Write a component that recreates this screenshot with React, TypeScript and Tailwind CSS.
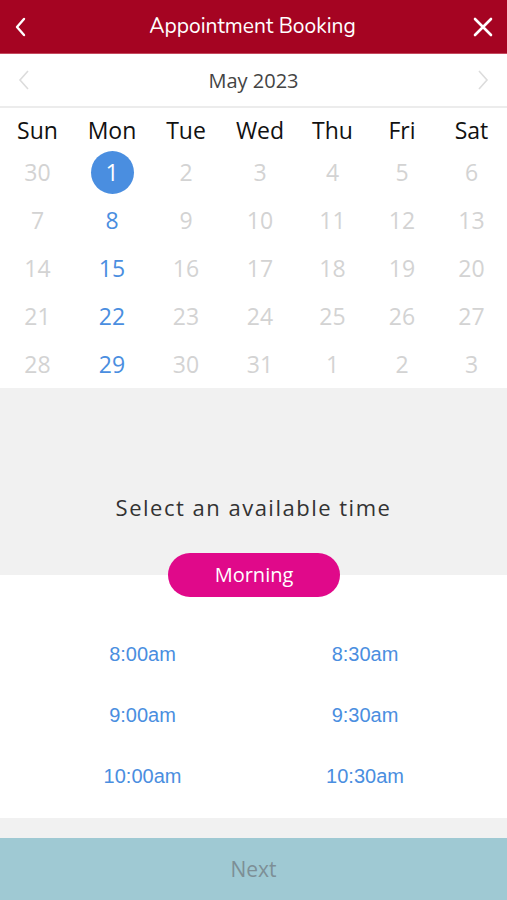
import React from "react";

const days = ["Sun", "Mon", "Tue", "Wed", "Thu", "Fri", "Sat"];
const weeks = [
  [30, 1, 2, 3, 4, 5, 6],
  [7, 8, 9, 10, 11, 12, 13],
  [14, 15, 16, 17, 18, 19, 20],
  [21, 22, 23, 24, 25, 26, 27],
  [28, 29, 30, 31, 1, 2, 3],
];
const times = [
  ["8:00am", "8:30am"],
  ["9:00am", "9:30am"],
  ["10:00am", "10:30am"],
];

export default function App() {
  return (
    <div className="w-[507px] h-[900px] flex flex-col bg-[#f1f1f1] overflow-hidden" style={{ fontFamily: '"Open Sans", sans-serif' }}>
      {/* Header */}
      <div className="h-[54px] bg-[#a50422] flex items-center justify-between px-[12px] border-b border-[#c44a5e]">
        <svg width="16" height="22" viewBox="0 0 16 22" className="ml-[1px]">
          <path d="M11 3 L4 11 L11 19" stroke="white" strokeWidth="2.4" fill="none" strokeLinecap="round" strokeLinejoin="round" />
        </svg>
        <div className="text-white text-[21px] leading-none pl-[4px]" style={{ fontFamily: '"Nunito", "Open Sans", sans-serif' }}>Appointment Booking</div>
        <svg width="22" height="22" viewBox="0 0 22 22" className="mr-[1px]">
          <path d="M3 3 L19 19 M19 3 L3 19" stroke="white" strokeWidth="2.6" strokeLinecap="round" />
        </svg>
      </div>

      {/* Month bar */}
      <div className="h-[54px] bg-white flex items-center justify-between px-[18px] border-b-2 border-[#ececec]">
        <svg width="12" height="22" viewBox="0 0 12 22">
          <path d="M10 2 L2 11 L10 20" stroke="#dcdcdc" strokeWidth="1.6" fill="none" />
        </svg>
        <div className="text-[#444] text-[20px] leading-none pt-[2px]">May 2023</div>
        <svg width="12" height="22" viewBox="0 0 12 22">
          <path d="M2 2 L10 11 L2 20" stroke="#dcdcdc" strokeWidth="1.6" fill="none" />
        </svg>
      </div>

      {/* Calendar */}
      <div className="bg-white">
        <div className="grid grid-cols-[75px_74px_74px_74px_71px_68px_71px] h-[40px] items-center">
          {days.map((d) => (
            <div key={d} className="text-center text-[23px] text-[#111] leading-none pt-[4px]">{d}</div>
          ))}
        </div>
        {weeks.map((w, wi) => (
          <div key={wi} className="grid grid-cols-[75px_74px_74px_74px_71px_68px_71px] h-[48px] items-center">
            {w.map((n, di) => {
              const selected = wi === 0 && di === 1;
              const active = di === 1 && !selected;
              return (
                <div key={di} className="flex justify-center items-center">
                  {selected ? (
                    <div className="w-[43px] h-[43px] rounded-full bg-[#4a8ee0] text-white text-[23px] flex items-center justify-center leading-none">{n}</div>
                  ) : (
                    <div className={`text-[23px] leading-none ${active ? "text-[#4a8ee0]" : "text-[#d3d3d3]"}`}>{n}</div>
                  )}
                </div>
              );
            })}
          </div>
        ))}
      </div>

      {/* Select time */}
      <div className="h-[187px] bg-[#f1f1f1] flex flex-col items-center justify-end">
        <div className="text-[22px] text-[#333] tracking-[1.5px] leading-none mb-[57px]">Select an available time</div>
      </div>

      <div className="bg-white h-[243px] relative">
        <div className="absolute left-[168px] top-[-22px] w-[172px] h-[44px] rounded-full bg-[#e0098a] flex items-center justify-center text-white text-[20px] leading-none">Morning</div>
        <div className="pt-[69px] flex flex-col gap-[41px]">
          {times.map((row, i) => (
            <div key={i} className="grid grid-cols-[285px_160px] h-[20px] items-center">
              {row.map((t) => (
                <div key={t} className="text-[20px] text-[#4a8ee0] leading-none text-center" style={{ fontFamily: '"Liberation Sans", Arial, sans-serif' }}>
                  {t}
                </div>
              ))}
            </div>
          ))}
        </div>
      </div>

      <div className="h-[20px] bg-[#f1f1f1]" />

      <div className="flex-1 bg-[#9fc9d3] flex items-center justify-center">
        <div className="text-[21px] text-[#7d8f96] leading-none">Next</div>
      </div>
    </div>
  );
}
